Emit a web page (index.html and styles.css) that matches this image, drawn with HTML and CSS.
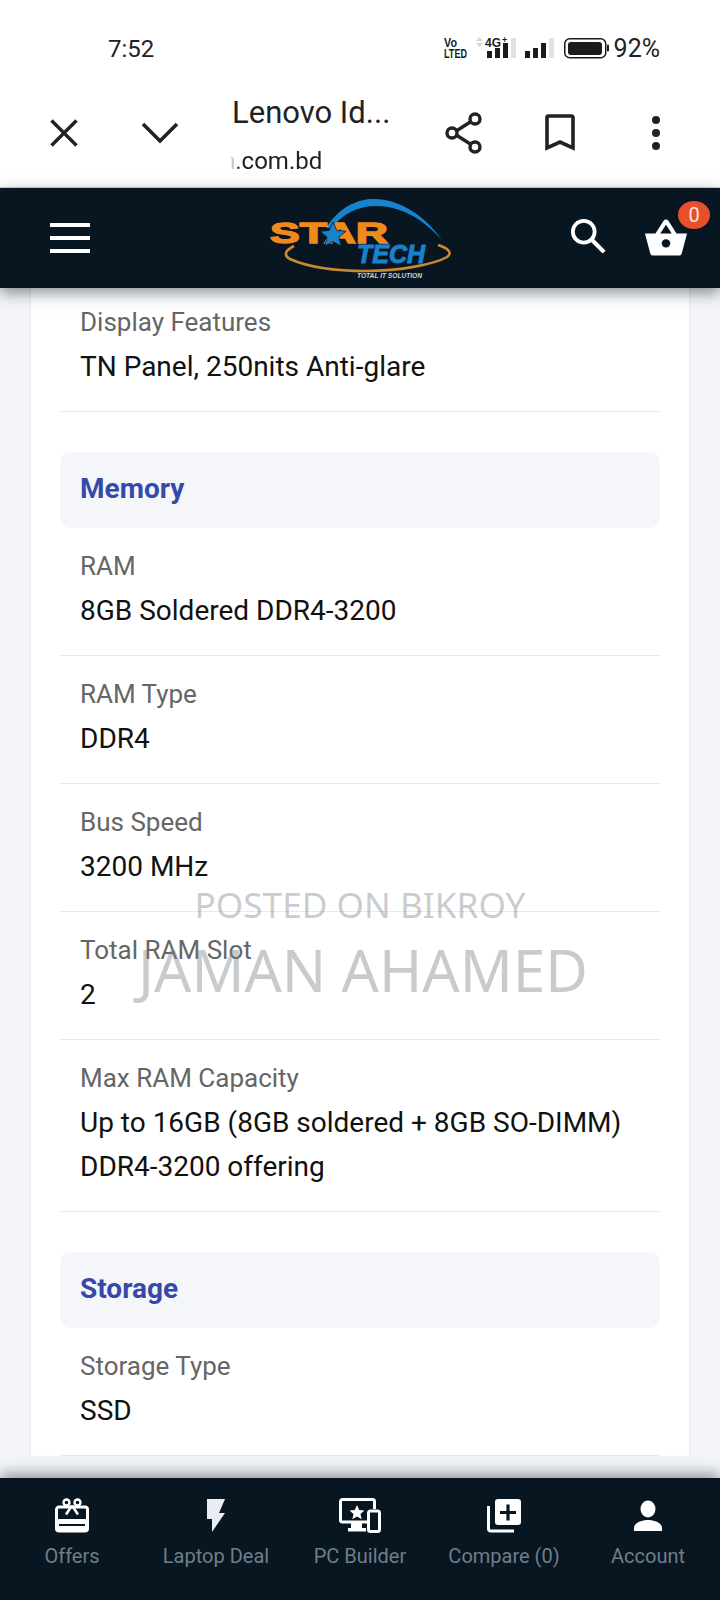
FILE: index.html
```html
<!DOCTYPE html>
<html lang="en">
<head>
<meta charset="utf-8">
<title>Lenovo IdeaPad specification</title>
<link rel="stylesheet" href="styles.css">
</head>
<body>
<div class="phone">
  <div class="statusbar">
    <span class="clock">7:52</span>
    <svg class="status-icons" width="168" height="30" viewBox="0 0 168 30">
      <text class="tiny" x="2" y="14" textLength="13" lengthAdjust="spacingAndGlyphs">Vo</text>
      <text class="tiny" x="2" y="25" textLength="23" lengthAdjust="spacingAndGlyphs">LTED</text>
      <path d="M34 8l3.500-4 3.500 4zM34 10l3.500 4 3.500-4z" fill="#d8d8d8"/>
      <text class="tiny" x="43" y="14" textLength="16" lengthAdjust="spacingAndGlyphs">4G</text>
      <text class="tiny-plus" x="60" y="10">+</text>
      <path d="M45 18h5v7h-5zM53 15h5v10h-5zM61 10h5v15h-5z" fill="#1b1b1b"/>
      <rect x="69" y="5" width="5" height="20" fill="#e2e2e2"/>
      <path d="M83 18h5v7h-5zM91 15h5v10h-5zM99 10h5v15h-5z" fill="#1b1b1b"/>
      <rect x="107" y="5" width="5" height="20" fill="#e2e2e2"/>
      <rect x="122.750" y="5.750" width="41" height="19" rx="5" fill="none" stroke="#1b1b1b" stroke-width="1.500"/>
      <rect x="126" y="9" width="34" height="13" rx="3" fill="#1b1b1b"/>
      <rect x="165" y="11.500" width="2" height="7" rx="1" fill="#1b1b1b"/>
    </svg>
    <span class="battery-text">92%</span>
  </div>

  <div class="toolbar">
    <svg class="ico-close" width="30" height="28" viewBox="0 0 30 28"><path d="M2.500 1.500l25 25M27.500 1.500l-25 25" stroke="#222" stroke-width="3.400" fill="none"/></svg>
    <svg class="ico-chevron" width="38" height="24" viewBox="0 0 38 24"><path d="M2 3l17 17L36 3" stroke="#222" stroke-width="3.600" fill="none"/></svg>
    <div class="page-title">
      <div class="title">Lenovo Id...</div>
      <div class="url">n.com.bd</div>
    </div>
    <svg class="ico-share" width="38" height="42" viewBox="0 0 38 42">
      <path d="M30 7L8 21l22 14" stroke="#222" stroke-width="3.400" fill="none"/>
      <g fill="#fff" stroke="#222" stroke-width="3.400"><circle cx="30" cy="7" r="5"/><circle cx="7" cy="21" r="5"/><circle cx="30" cy="35" r="5"/></g>
    </svg>
    <svg class="ico-bookmark" width="30" height="38" viewBox="0 0 30 38"><path d="M2 3.500a1.500 1.500 0 0 1 1.500-1.500h23a1.500 1.500 0 0 1 1.500 1.500V34L15 28 2 34z" stroke="#222" stroke-width="3.600" fill="none"/></svg>
    <svg class="ico-dots" width="8" height="34" viewBox="0 0 8 34"><circle cx="4" cy="4" r="4" fill="#222"/><circle cx="4" cy="17" r="4" fill="#222"/><circle cx="4" cy="30" r="4" fill="#222"/></svg>
  </div>

  <header class="site-header">
    <div class="burger"><i></i><i></i><i></i></div>
    <svg class="logo" width="182" height="84" viewBox="0 0 182 84">
      <path d="M56 30C70 8 88 1 104 1c26 0 51 17 68 41C152 20 130 8 106 8 88 8 72 16 62 30z" fill="#1683cf"/>
      <path d="M24 48C14 53 14 58 20 61c20 9 50 12 77 12 33 0 68-7 80-14 6-4 1-9-9-12" fill="none" stroke="#c98a2e" stroke-width="2.600"/>
      <text class="logo-star" x="0" y="45" textLength="118" lengthAdjust="spacingAndGlyphs">STAR</text>
      <path d="M63 24l3.800 8.500 9.200.7-7 6 2.200 9L63 43.500 54.800 48.200l2.200-9-7-6 9.200-.7z" fill="#1683cf" stroke="#081621" stroke-width=".8"/>
      <text class="logo-tech" x="87" y="65" textLength="68" lengthAdjust="spacingAndGlyphs">TECH</text>
      <text class="logo-tag" x="87" y="80" textLength="65" lengthAdjust="spacingAndGlyphs">TOTAL IT SOLUTION</text>
    </svg>
    <svg class="ico-search" width="36" height="36" viewBox="0 0 38 38"><circle cx="14.500" cy="14.500" r="11.500" fill="none" stroke="#fff" stroke-width="4"/><path d="M23 23l13 13" stroke="#fff" stroke-width="4.400" fill="none"/></svg>
    <div class="cart">
      <svg width="44" height="38" viewBox="0 0 46 42" preserveAspectRatio="none"><path d="M1 17h11L20.500 3a3 3 0 0 1 5 0L34 17h11l-5.500 22a3 3 0 0 1-3 2.500h-27a3 3 0 0 1-3-2.500z" fill="#fff"/><path d="M17 17l6-9.500 6 9.500z" fill="#081621"/><circle cx="23" cy="28" r="4.500" fill="#081621"/></svg>
      <span class="badge">0</span>
    </div>
  </header>

  <main class="content">
    <section class="card">
      <div class="row"><div class="label">Display Features</div><div class="value">TN Panel, 250nits Anti-glare</div></div>
      <h3 class="band">Memory</h3>
      <div class="row"><div class="label">RAM</div><div class="value">8GB Soldered DDR4-3200</div></div>
      <div class="row"><div class="label">RAM Type</div><div class="value">DDR4</div></div>
      <div class="row"><div class="label">Bus Speed</div><div class="value">3200 MHz</div></div>
      <div class="row"><div class="label">Total RAM Slot</div><div class="value">2</div></div>
      <div class="row"><div class="label">Max RAM Capacity</div><div class="value">Up to 16GB (8GB soldered + 8GB SO-DIMM) DDR4-3200 offering</div></div>
      <h3 class="band">Storage</h3>
      <div class="row"><div class="label">Storage Type</div><div class="value">SSD</div></div>
    </section>
  </main>

  <nav class="bottom-nav">
    <div class="nav-item">
      <svg class="nav-ico" width="36" height="36" viewBox="0 0 36 36">
        <path d="M2.500 11.500a2.500 2.500 0 0 1 2.500-2.500h26a2.500 2.500 0 0 1 2.500 2.500v19a2.500 2.500 0 0 1-2.500 2.500h-26a2.500 2.500 0 0 1-2.500-2.500z" fill="none" stroke="#fff" stroke-width="3"/>
        <path d="M2.500 21h31v11h-31z" fill="#fff"/><path d="M5 26h26v2H5z" fill="#081621"/>
        <circle cx="12.500" cy="4.500" r="3" fill="none" stroke="#fff" stroke-width="2.400"/><circle cx="23.500" cy="4.500" r="3" fill="none" stroke="#fff" stroke-width="2.400"/>
        <path d="M18 7.500l-6 9M18 7.500l6 9" stroke="#fff" stroke-width="2.600" fill="none"/>
      </svg>
      <span>Offers</span>
    </div>
    <div class="nav-item">
      <svg class="nav-ico" width="36" height="36" viewBox="0 0 36 36"><path d="M9 1h18l-6 14h6L14 34V21H9z" fill="#e9edf1"/></svg>
      <span>Laptop Deal</span>
    </div>
    <div class="nav-item">
      <svg class="nav-ico" width="42" height="36" viewBox="0 0 42 36">
        <path d="M28 24H3.500A2 2 0 0 1 1.500 22V3.500a2 2 0 0 1 2-2h30a2 2 0 0 1 2 2V11" fill="none" stroke="#fff" stroke-width="3"/>
        <path d="M12 24h11v6h4v3.500H9V30h3z" fill="#fff"/>
        <path d="M18 7l2.200 5 5.300.4-4 3.500 1.200 5.300L18 18.500l-4.700 2.700 1.200-5.300-4-3.500 5.300-.4z" fill="#fff"/>
        <rect x="29.500" y="13" width="11" height="20.500" rx="2" fill="#081621" stroke="#fff" stroke-width="3"/>
      </svg>
      <span>PC Builder</span>
    </div>
    <div class="nav-item">
      <svg class="nav-ico" width="36" height="36" viewBox="0 0 36 36">
        <rect x="9" y="1" width="26" height="26" rx="3" fill="#fff"/>
        <path d="M2.500 8v22.500A2.500 2.500 0 0 0 5 33h23" fill="none" stroke="#fff" stroke-width="3"/>
        <path d="M22 6.500v16M14 14.500h16" stroke="#081621" stroke-width="3.200"/>
      </svg>
      <span>Compare (0)</span>
    </div>
    <div class="nav-item">
      <svg class="nav-ico" width="36" height="36" viewBox="0 0 36 36"><ellipse cx="18" cy="11" rx="7.500" ry="8.500" fill="#fff"/><path d="M4 33v-3c0-5 7-8 14-8s14 3 14 8v3z" fill="#fff"/></svg>
      <span>Account</span>
    </div>
  </nav>

  <div class="watermark">
    <div class="wm-small">POSTED ON BIKROY</div>
    <div class="wm-large">JAMAN AHAMED</div>
  </div>
</div>
</body>
</html>
```

FILE: styles.css
```css
* { box-sizing: border-box; }
html, body { margin: 0; padding: 0; }
body { font-family: Roboto, "Liberation Sans", sans-serif; background: #f3f5f9; }

.phone {
  position: relative;
  width: 720px;
  height: 1600px;
  display: flex;
  flex-direction: column;
  overflow: hidden;
}

/* Android status bar */
.statusbar {
  height: 82px;
  flex: none;
  background: #fff;
  display: flex;
  align-items: flex-end;
  padding: 0 60px 19px 108px;
  color: #222;
}
.clock { font-size: 24px; line-height: 28px; }
.status-icons { margin-left: auto; margin-right: 4px; }
.battery-text { font-size: 25px; line-height: 28px; }
.tiny { font-family: "Liberation Sans", sans-serif; font-weight: 700; font-size: 13px; fill: #1b1b1b; }
.tiny-plus { font-family: "Liberation Sans", sans-serif; font-weight: 700; font-size: 9px; fill: #1b1b1b; }

/* Custom tab toolbar */
.toolbar {
  height: 106px;
  flex: none;
  background: #fff;
  display: flex;
  align-items: center;
  padding: 0 0 4px 49px;
  border-bottom: 1px solid #cfd3d6;
}
.ico-chevron { margin-left: 62px; }
.page-title { width: 213px; margin-left: 53px; margin-top: 5px; color: #222; }
.title { font-size: 31px; line-height: 34px; }
.url {
  font-size: 24px;
  line-height: 28px;
  margin-top: 17px;
  margin-left: -10px;
  -webkit-mask-image: linear-gradient(90deg, transparent 0, transparent 8px, #000 18px);
  mask-image: linear-gradient(90deg, transparent 0, transparent 8px, #000 18px);
}
.ico-bookmark { margin-left: 62px; }
.ico-dots { margin-left: 77px; }

/* Store header */
.site-header {
  height: 100px;
  flex: none;
  background: #081621;
  display: flex;
  align-items: center;
  padding-left: 50px;
  position: relative;
  z-index: 2;
  box-shadow: 0 5px 14px rgba(40, 50, 60, .55);
}
.burger { width: 40px; display: flex; flex-direction: column; gap: 9px; }
.burger i { display: block; height: 4px; background: #fff; }
.logo { margin-left: 180px; margin-top: 4px; }
.ico-search { margin-left: 118px; margin-top: -5px; }
.cart { margin-left: 38px; margin-top: -2px; position: relative; display: flex; }
.badge {
  position: absolute;
  top: -17px;
  right: -22px;
  width: 32px;
  height: 28px;
  border-radius: 50%;
  background: #e8502c;
  color: #fde3d8;
  font-size: 20px;
  line-height: 28px;
  text-align: center;
}

.logo-star { font-family: "Liberation Sans", sans-serif; font-weight: 700; font-size: 30px; fill: #f08a1d; stroke: #f08a1d; stroke-width: 1.4; }
.logo-tech { font-family: "Liberation Sans", sans-serif; font-weight: 700; font-style: italic; font-size: 26px; fill: #1683cf; stroke: #1683cf; stroke-width: 1; }
.logo-tag { font-family: "Liberation Sans", sans-serif; font-weight: 700; font-style: italic; font-size: 7px; fill: #cfd5da; }

/* Specification card */
.content {
  flex: 1;
  min-height: 0;
  overflow: hidden;
  padding: 0 30px;
}
.card {
  background: #fff;
  border-left: 1px solid #e9ecf0;
  border-right: 1px solid #e9ecf0;
  padding: 0 29px;
  margin-top: -4px;
}
.row {
  padding: 16px 20px 22px;
  border-bottom: 1px solid #e8eaec;
}
.label { font-size: 26px; line-height: 45px; color: #666; }
.value { font-size: 28px; line-height: 44px; color: #111; }
.band {
  margin: 40px 0 0;
  height: 76px;
  background: #f4f6fa;
  border-radius: 10px;
  padding-left: 20px;
  font-size: 28px;
  font-weight: 700;
  line-height: 74px;
  color: #3749a8;
}

/* Bottom navigation */
.bottom-nav {
  height: 122px;
  flex: none;
  background: #081621;
  display: grid;
  grid-template-columns: repeat(5, 144px);
  position: relative;
  z-index: 2;
  box-shadow: 0 -4px 14px rgba(40, 50, 60, .5);
}
.nav-item {
  display: flex;
  flex-direction: column;
  align-items: center;
  padding-top: 20px;
  color: #6f7e89;
  font-size: 20px;
}
.nav-ico { display: block; }
.nav-item span { margin-top: 8px; line-height: 28px; }

/* Classified-site watermark over the screenshot */
.watermark {
  position: absolute;
  left: 0;
  right: 0;
  top: 879px;
  text-align: center;
  font-family: "Noto Sans", sans-serif;
  color: rgba(125, 130, 135, .42);
  pointer-events: none;
  z-index: 3;
}
.wm-small { font-size: 35.200px; line-height: 50px; }
.wm-large { font-size: 58.500px; line-height: 80px; padding-left: 6px; }
```
